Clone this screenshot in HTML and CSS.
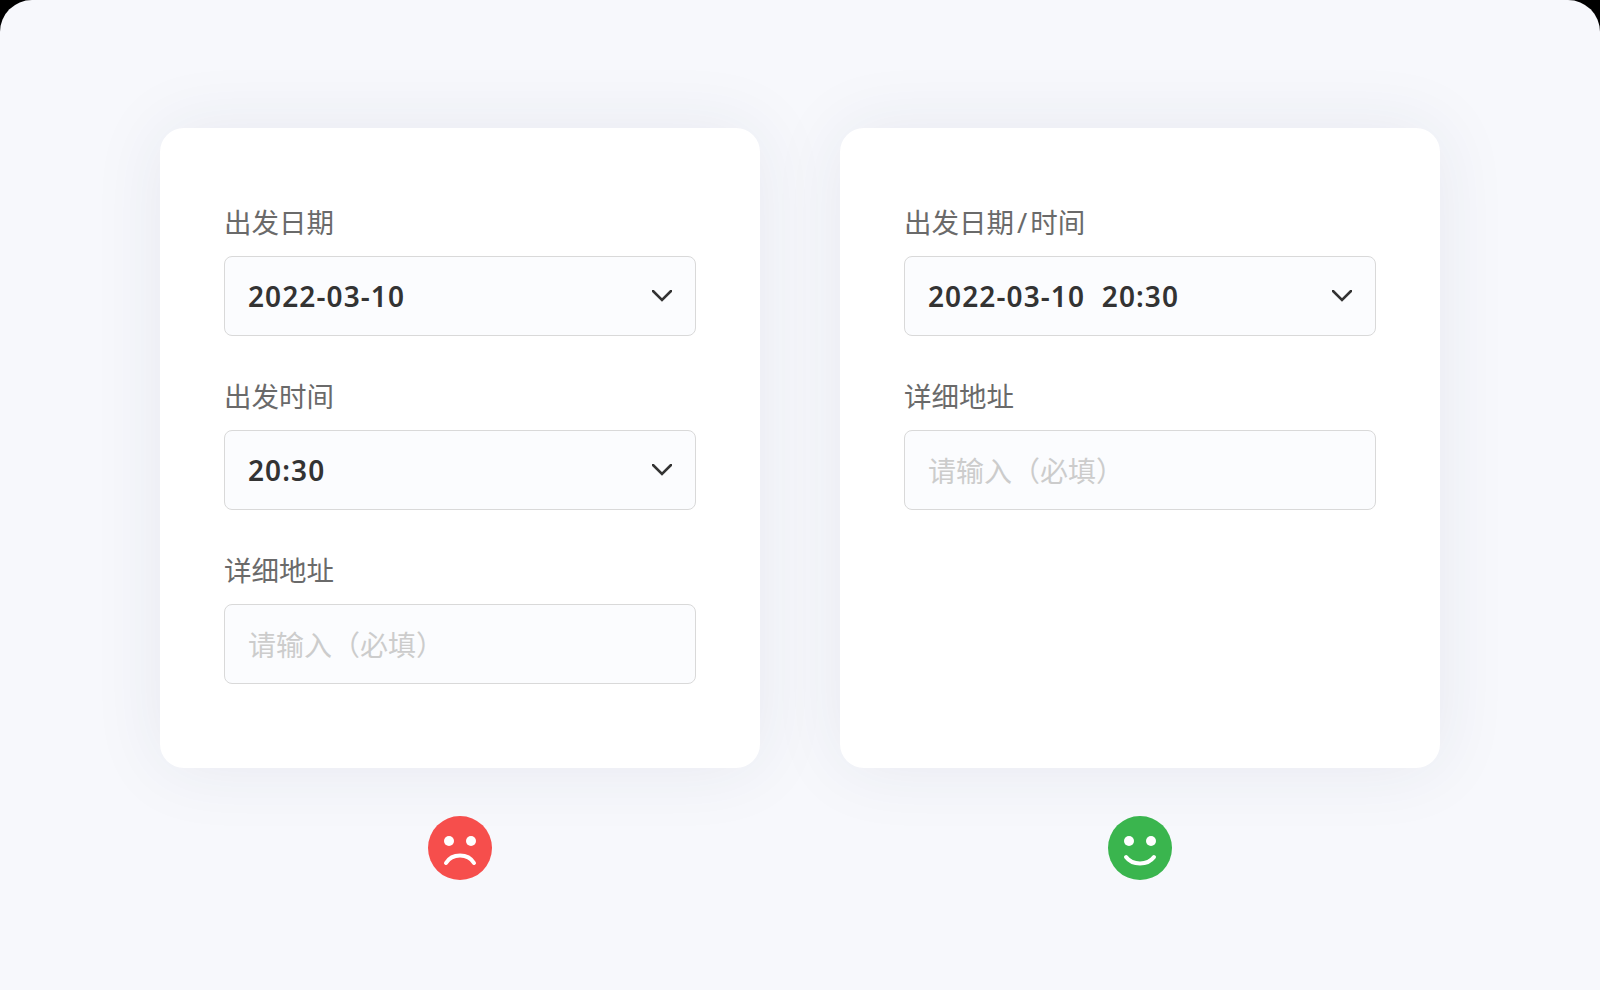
FILE: index.html
```html
<!DOCTYPE html>
<html lang="zh-CN">
<head>
<meta charset="utf-8">
<title>表单对比</title>
<link rel="stylesheet" href="styles.css">
</head>
<body>
<main class="page">
  <section class="col">
    <div class="card">
      <div class="field">
        <div class="label">出发日期</div>
        <div class="control"><span class="value">2022-03-10</span>
          <svg class="chev" viewBox="0 0 20 12"><path d="M1 1l9 9 9-9"/></svg></div>
      </div>
      <div class="field">
        <div class="label">出发时间</div>
        <div class="control"><span class="value">20:30</span>
          <svg class="chev" viewBox="0 0 20 12"><path d="M1 1l9 9 9-9"/></svg></div>
      </div>
      <div class="field">
        <div class="label">详细地址</div>
        <div class="control"><span class="placeholder">请输入（必填）</span></div>
      </div>
    </div>
    <svg class="face" viewBox="0 0 64 64">
      <circle class="bad" cx="32" cy="32" r="32"/>
      <circle class="eye" cx="21" cy="25" r="5"/><circle class="eye" cx="43" cy="25" r="5"/>
      <path class="mouth" d="M18 47c3-5 8-7.500 14-7.500S43 42 46 47"/>
    </svg>
  </section>
  <section class="col">
    <div class="card">
      <div class="field">
        <div class="label">出发日期<span class="slash">/</span>时间</div>
        <div class="control"><span class="value">2022-03-10&nbsp;&nbsp;20:30</span>
          <svg class="chev" viewBox="0 0 20 12"><path d="M1 1l9 9 9-9"/></svg></div>
      </div>
      <div class="field">
        <div class="label">详细地址</div>
        <div class="control"><span class="placeholder">请输入（必填）</span></div>
      </div>
    </div>
    <svg class="face" viewBox="0 0 64 64">
      <circle class="good" cx="32" cy="32" r="32"/>
      <circle class="eye" cx="21" cy="25" r="5"/><circle class="eye" cx="43" cy="25" r="5"/>
      <path class="mouth" d="M18 41c3 4 8 6.500 14 6.500S43 45 46 41"/>
    </svg>
  </section>
</main>
</body>
</html>
```
FILE: styles.css
```css
html, body {
  margin: 0;
  height: 100%;
  background: #000;
  overflow: hidden;
}
.page {
  box-sizing: border-box;
  height: 990px;
  padding-top: 128px;
  display: flex;
  justify-content: center;
  gap: 80px;
  background: #f7f8fc;
  border-radius: 32px 32px 0 0;
  font-family: "Noto Sans", "Noto Sans CJK SC", sans-serif;
}
.col {
  width: 600px;
  display: flex;
  flex-direction: column;
  align-items: center;
  gap: 48px;
}
.card {
  box-sizing: border-box;
  width: 600px;
  height: 640px;
  padding: 74px 64px 0;
  display: flex;
  flex-direction: column;
  gap: 40px;
  background: #fff;
  border-radius: 24px;
  box-shadow: 0 0 72px rgba(40, 50, 90, 0.08);
}
.field {
  display: flex;
  flex-direction: column;
  gap: 12px;
}
.label {
  height: 42px;
  line-height: 42px;
  font-size: 27.5px;
  color: #6a6a6a;
}
.slash {
  margin: 0 3px;
}
.control {
  box-sizing: border-box;
  height: 80px;
  padding: 0 23px;
  display: flex;
  align-items: center;
  justify-content: space-between;
  background: #fbfcfe;
  border: 1px solid #d9d9d9;
  border-radius: 8px;
}
.value {
  font-size: 28px;
  font-weight: 600;
  color: #333;
  letter-spacing: 1.1px;
}
.placeholder {
  font-size: 28px;
  color: #ccc;
}
.chev {
  width: 20px;
  height: 12px;
  fill: none;
  stroke: #333;
  stroke-width: 2.500;
  stroke-linecap: round;
}
.face {
  width: 64px;
  height: 64px;
}
.bad { fill: #f64e4c; }
.good { fill: #3ab54e; }
.eye { fill: #fff; }
.mouth {
  fill: none;
  stroke: #fff;
  stroke-width: 4;
  stroke-linecap: round;
}
```
